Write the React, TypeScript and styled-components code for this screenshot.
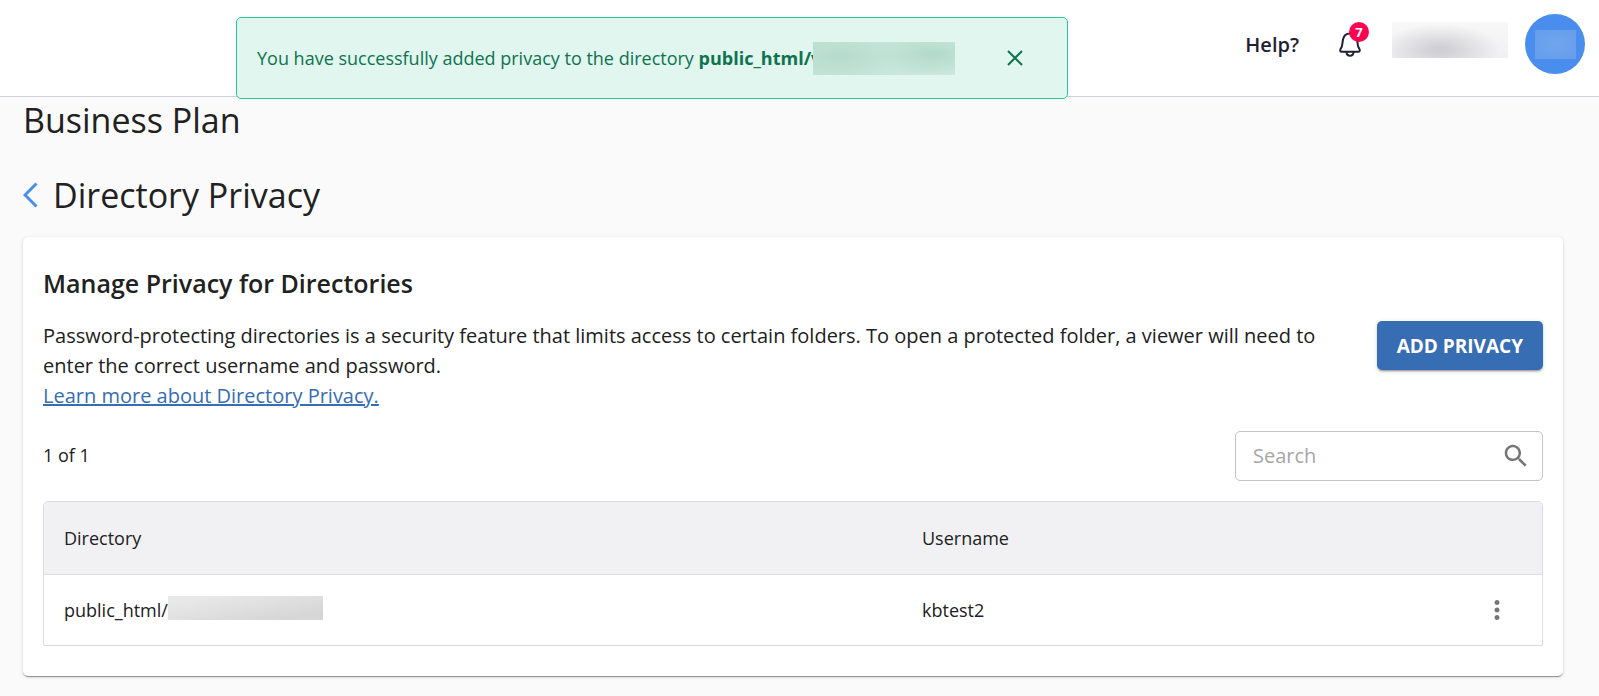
import React from "react";
import styled, { createGlobalStyle } from "styled-components";

const GlobalStyle = createGlobalStyle`
  *, *::before, *::after { box-sizing: border-box; }
  body {
    margin: 0;
    background: #fafafa;
    color: #212121;
    font-family: "Open Sans", "Noto Sans", sans-serif;
    font-size: 18px;
    line-height: 24px;
  }
  h1, h2, h3, p { margin: 0; }
  button { font: inherit; color: inherit; border: 0; background: none; padding: 0; cursor: pointer; }
`;

const TopBar = styled.header`
  display: flex;
  justify-content: flex-end;
  align-items: flex-start;
  height: 97px;
  padding: 14px 14px 0 0;
  background: #fff;
  border-bottom: 1px solid #d0d0dc;
`;

const TopBarItems = styled.div`
  display: flex;
  align-items: center;
  height: 60px;
`;

const HelpLink = styled.a`
  color: #1f2133;
  font-size: 20px;
  font-weight: 600;
  line-height: 26px;
  padding-top: 2px;
  text-decoration: none;
`;

const BellButton = styled.button`
  position: relative;
  display: flex;
  width: 28px;
  height: 28px;
  margin: 0 28px 0 37px;
`;

const Badge = styled.span`
  position: absolute;
  top: -8px;
  left: 13px;
  width: 20px;
  height: 20px;
  border-radius: 50%;
  background: #ff0050;
  color: #fff;
  font-size: 13px;
  font-weight: 700;
  line-height: 20px;
  text-align: center;
`;

const AccountName = styled.span`
  width: 116px;
  height: 36px;
  margin: 0 17px 8px 0;
  background:
    radial-gradient(ellipse 60px 26px at 48px 28px, #d0d0d4 10%, rgba(208, 208, 212, 0) 100%),
    linear-gradient(#f8f8f8, #f0f0f2);
`;

const Avatar = styled.button`
  display: flex;
  align-items: center;
  justify-content: center;
  width: 60px;
  height: 60px;
  border-radius: 50%;
  background: #498eed;
`;

const AvatarInitials = styled.span`
  width: 41px;
  height: 29px;
  background: radial-gradient(#70a5ef, #659dec);
`;

const Toast = styled.div`
  position: absolute;
  top: 17px;
  left: 236px;
  right: 531px;
  display: flex;
  align-items: center;
  min-height: 82px;
  padding: 0 44px 0 20px;
  border: 1px solid #2cc893;
  border-radius: 5px;
  background: #e0f6ee;
  color: #0f7350;
`;

const ToastText = styled.p`
  display: flex;
  flex: 1;
  align-items: center;
  height: 34px;
  margin: 0 52px 0 0;
  line-height: 32px;
  white-space: pre;
`;

const ToastPath = styled.strong`
  font-weight: 700;
`;

const ToastMask = styled.span`
  position: relative;
  flex: 1;
  height: 33px;
  margin-left: -8px;
  background:
    radial-gradient(ellipse 60px 22px at 120px 12px, #b1d9ca, rgba(177, 217, 202, 0)),
    radial-gradient(ellipse 60px 22px at 30px 14px, #b5dbcd, rgba(181, 219, 205, 0)),
    linear-gradient(90deg, #c2e3d7, #cde9df);
`;

const CloseButton = styled.button`
  display: flex;
`;

const Page = styled.main`
  padding: 1px 36px 20px 23px;
`;

const PageTitle = styled.h1`
  font-size: 34px;
  font-weight: 400;
  line-height: 44px;
`;

const SectionTitleRow = styled.div`
  display: flex;
  align-items: center;
  gap: 15px;
  margin: 31px 0 20px;
`;

const SectionTitle = styled.h2`
  font-size: 34px;
  font-weight: 400;
  line-height: 44px;
`;

const BackLink = styled.a`
  display: flex;
`;

const Card = styled.section`
  padding: 30px 20px;
  border-radius: 5px;
  background: #fff;
  box-shadow: 0 3px 1px -2px rgba(0, 0, 0, 0.2), 0 1px 1px rgba(0, 0, 0, 0.24), 0 1px 4px rgba(0, 0, 0, 0.12);
`;

const CardTitle = styled.h3`
  font-size: 25px;
  font-weight: 600;
  line-height: 32px;
`;

const Intro = styled.div`
  display: flex;
  align-items: flex-start;
  justify-content: space-between;
  gap: 20px;
  margin-top: 22px;
`;

const IntroText = styled.p`
  font-size: 20px;
  line-height: 30px;
`;

const LearnLink = styled.a`
  display: table;
  color: #366db3;
  text-decoration: underline;
`;

const PrimaryButton = styled.button`
  flex: none;
  height: 49px;
  padding: 0 20px;
  border-radius: 5px;
  background: #366db3;
  color: #fff;
  font-size: 19px;
  font-weight: 700;
  text-transform: uppercase;
  box-shadow: 0 3px 1px -2px rgba(0, 0, 0, 0.2), 0 2px 2px rgba(0, 0, 0, 0.14), 0 1px 5px rgba(0, 0, 0, 0.12);
`;

const ListTools = styled.div`
  display: flex;
  align-items: center;
  justify-content: space-between;
  margin: 20px 0;
`;

const Count = styled.span`
  padding-bottom: 2px;
`;

const SearchField = styled.label`
  display: flex;
  align-items: center;
  width: 308px;
  height: 50px;
  padding: 0 11px 0 17px;
  border: 1px solid #c4c4c4;
  border-radius: 5px;
`;

const SearchInput = styled.input`
  flex: 1;
  min-width: 0;
  padding: 0;
  border: 0;
  outline: 0;
  background: none;
  color: inherit;
  font: inherit;
  font-size: 20px;
  &::placeholder { color: #a6a6a6; opacity: 1; }
`;

const TableFrame = styled.div`
  border: 1px solid #dcdcde;
  border-radius: 5px 5px 0 0;
  overflow: hidden;
`;

const Table = styled.table`
  width: 100%;
  border-collapse: separate;
  border-spacing: 0;
  table-layout: fixed;
`;

const HeadCell = styled.th<{ $width?: string }>`
  width: ${(p) => p.$width ?? "auto"};
  height: 73px;
  padding: 0 20px;
  border-bottom: 1px solid #dcdcde;
  background: #f1f1f4;
  font-weight: 500;
  text-align: left;
`;

const Cell = styled.td`
  height: 70px;
  padding: 0 30px 0 20px;
`;

const PathValue = styled.span`
  display: flex;
  align-items: center;
`;

const PathMask = styled.span`
  width: 155px;
  height: 24px;
  margin-bottom: 4px;
  background: linear-gradient(170deg, #e8e8e8 15%, #d6d6d6 85%);
`;

const MenuButton = styled.button`
  display: flex;
  margin-left: auto;
`;

const BellIcon = () => (
  <svg width="28" height="28" viewBox="0 0 28 28" fill="none" stroke="#1f2133" strokeWidth="2">
    <path
      d="M14 3.5C9.8 3.5 7.6 6.2 7 9.5L6 15.8C5.7 17.6 4.2 18.8 4.2 20.4C4.2 21.3 4.8 21.8 5.6 21.8H22.4C23.2 21.8 23.8 21.3 23.8 20.4C23.8 18.8 22.3 17.6 22 15.8L21 9.5C20.4 6.2 18.2 3.5 14 3.5Z"
      strokeLinejoin="round"
    />
    <path d="M10.5 22C10.5 24.4 12 25.8 14 25.8S17.5 24.4 17.5 22" />
  </svg>
);

const SearchIcon = () => (
  <svg width="30" height="30" viewBox="0 0 24 24" fill="#757575">
    <path d="M15.5 14h-.79l-.28-.27C15.41 12.59 16 11.11 16 9.5 16 5.91 13.09 3 9.5 3S3 5.91 3 9.5 5.91 16 9.5 16c1.61 0 3.09-.59 4.23-1.57l.27.28v.79l5 4.99L20.49 19l-4.99-5zm-6 0C7.01 14 5 11.99 5 9.5S7.01 5 9.5 5 14 7.01 14 9.5 11.99 14 9.5 14z" />
  </svg>
);

const MoreIcon = () => (
  <svg width="30" height="30" viewBox="0 0 24 24" fill="#757575">
    <path d="M12 8c1.1 0 2-.9 2-2s-.9-2-2-2-2 .9-2 2 .9 2 2 2zm0 2c-1.1 0-2 .9-2 2s.9 2 2 2 2-.9 2-2-.9-2-2-2zm0 6c-1.1 0-2 .9-2 2s.9 2 2 2 2-.9 2-2-.9-2-2-2z" />
  </svg>
);

const rows = [{ directory: "public_html/", username: "kbtest2" }];

export default function App() {
  return (
    <>
      <GlobalStyle />
      <TopBar>
        <TopBarItems>
          <HelpLink href="#help">Help?</HelpLink>
          <BellButton aria-label="Notifications">
            <BellIcon />
            <Badge>7</Badge>
          </BellButton>
          <AccountName />
          <Avatar aria-label="Account">
            <AvatarInitials />
          </Avatar>
        </TopBarItems>
      </TopBar>
      <Toast role="status">
        <ToastText>
          <span>You have successfully added privacy to the directory </span>
          <ToastPath>public_html/v</ToastPath>
          <ToastMask />
        </ToastText>
        <CloseButton aria-label="Close">
          <svg width="16" height="16" viewBox="0 0 16 16" stroke="#0f7350" strokeWidth="2">
            <path d="M1 1L15 15M15 1L1 15" />
          </svg>
        </CloseButton>
      </Toast>
      <Page>
        <PageTitle>Business Plan</PageTitle>
        <SectionTitleRow>
          <BackLink href="#back" aria-label="Back">
            <svg width="15" height="26" viewBox="0 0 15 26" fill="none" stroke="#498eed" strokeWidth="3">
              <path d="M13.5 1.5L2 13L13.5 24.5" />
            </svg>
          </BackLink>
          <SectionTitle>Directory Privacy</SectionTitle>
        </SectionTitleRow>
        <Card>
          <CardTitle>Manage Privacy for Directories</CardTitle>
          <Intro>
            <IntroText>
              Password-protecting directories is a security feature that limits access to certain folders. To open a
              protected folder, a viewer will need to enter the correct username and password.
              <LearnLink href="#learn">Learn more about Directory Privacy.</LearnLink>
            </IntroText>
            <PrimaryButton>Add Privacy</PrimaryButton>
          </Intro>
          <ListTools>
            <Count>1 of 1</Count>
            <SearchField>
              <SearchInput type="text" placeholder="Search" aria-label="Search" />
              <SearchIcon />
            </SearchField>
          </ListTools>
          <TableFrame>
            <Table>
              <thead>
                <tr>
                  <HeadCell $width="858px">Directory</HeadCell>
                  <HeadCell>Username</HeadCell>
                  <HeadCell $width="80px" aria-label="Actions" />
                </tr>
              </thead>
              <tbody>
                {rows.map((row) => (
                  <tr key={row.username}>
                    <Cell>
                      <PathValue>
                        {row.directory}
                        <PathMask />
                      </PathValue>
                    </Cell>
                    <Cell>{row.username}</Cell>
                    <Cell>
                      <MenuButton aria-label="Row actions">
                        <MoreIcon />
                      </MenuButton>
                    </Cell>
                  </tr>
                ))}
              </tbody>
            </Table>
          </TableFrame>
        </Card>
      </Page>
    </>
  );
}
